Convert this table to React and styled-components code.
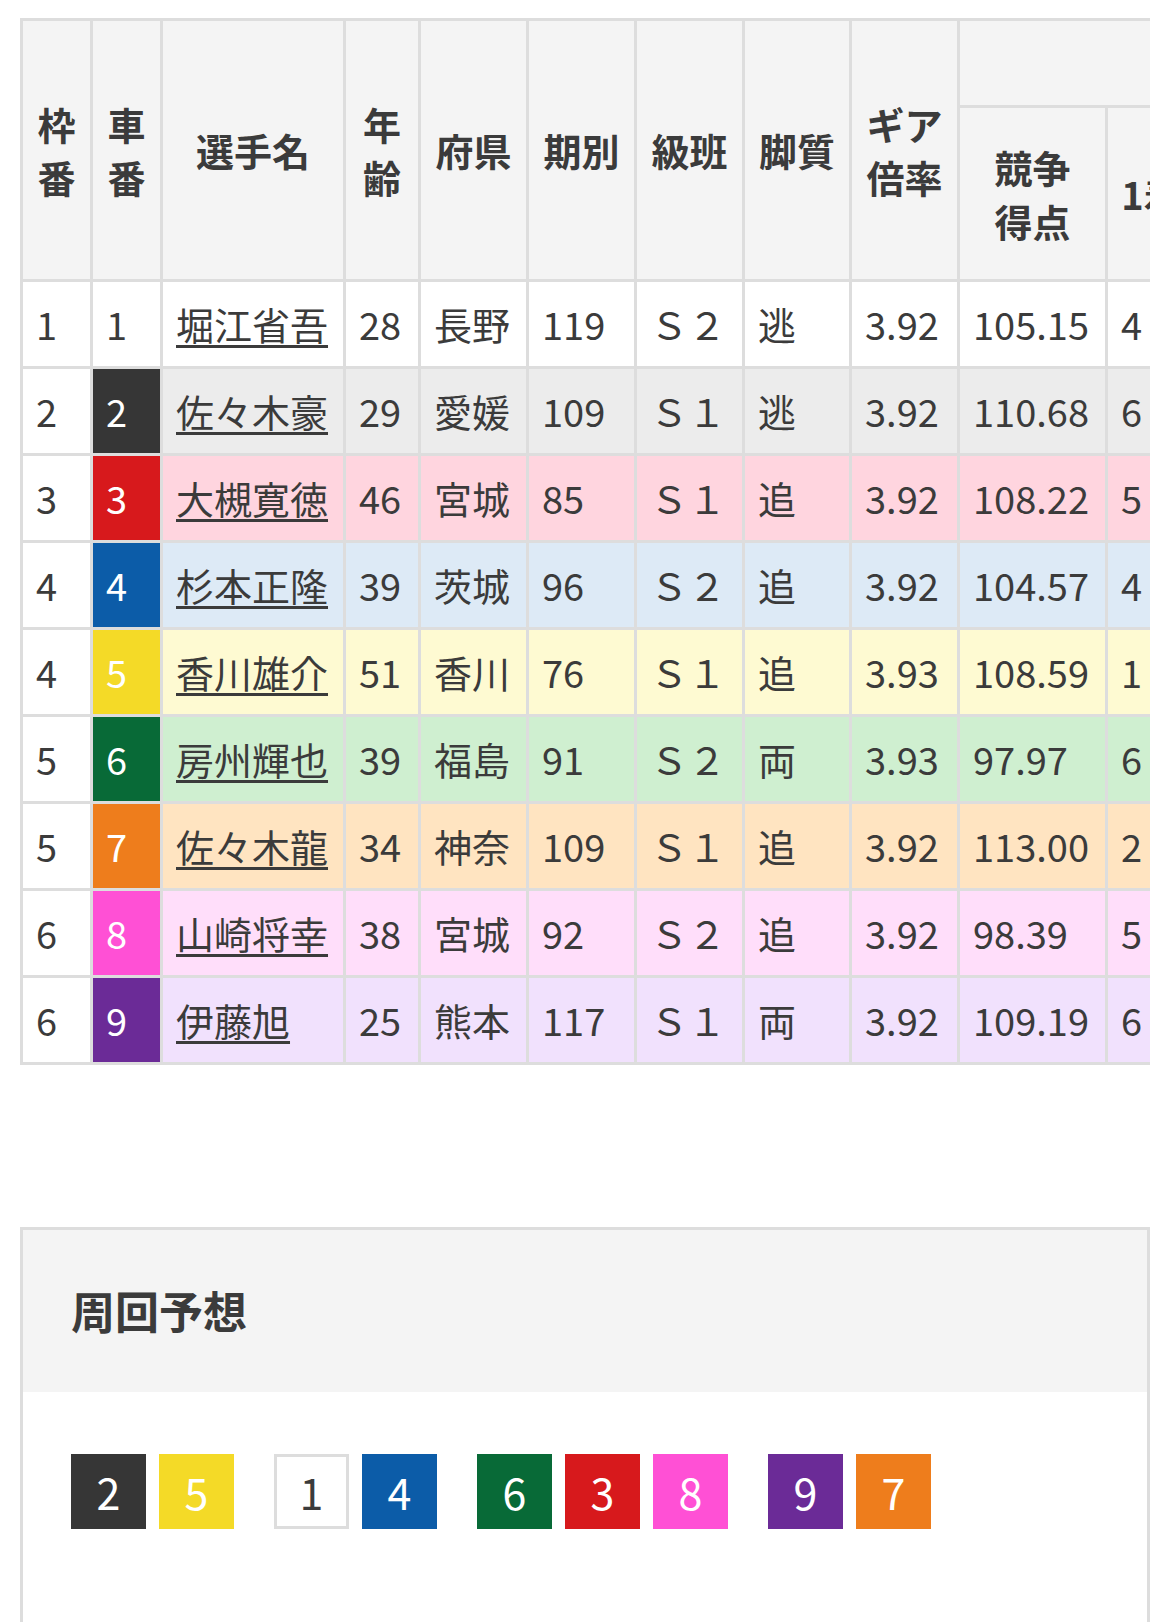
import React from "react";
import styled, { createGlobalStyle } from "styled-components";

const GlobalStyle = createGlobalStyle`
  body {
    margin: 0;
    background: #fff;
    font-family: "Noto Sans CJK JP", "Noto Sans", sans-serif;
    color: #3b3b3b;
  }
`;

const CAR = {
  1: { box: "#ffffff", row: "#ffffff", text: "#3b3b3b" },
  2: { box: "#363636", row: "#ececec", text: "#ffffff" },
  3: { box: "#d7191c", row: "#ffd5df", text: "#ffffff" },
  4: { box: "#0c5ca8", row: "#ddeaf6", text: "#ffffff" },
  5: { box: "#f4da27", row: "#fefad2", text: "#ffffff" },
  6: { box: "#086a37", row: "#cfefd0", text: "#ffffff" },
  7: { box: "#ee7d1c", row: "#ffe4c1", text: "#ffffff" },
  8: { box: "#ff50d5", row: "#ffdefa", text: "#ffffff" },
  9: { box: "#6b2b97", row: "#f1e1fd", text: "#ffffff" },
};

const racers = [
  { waku: 1, car: 1, name: "堀江省吾", age: 28, pref: "長野", term: 119, cls: "Ｓ２", leg: "逃", gear: "3.92", score: "105.15", w1: 4 },
  { waku: 2, car: 2, name: "佐々木豪", age: 29, pref: "愛媛", term: 109, cls: "Ｓ１", leg: "逃", gear: "3.92", score: "110.68", w1: 6 },
  { waku: 3, car: 3, name: "大槻寛徳", age: 46, pref: "宮城", term: 85, cls: "Ｓ１", leg: "追", gear: "3.92", score: "108.22", w1: 5 },
  { waku: 4, car: 4, name: "杉本正隆", age: 39, pref: "茨城", term: 96, cls: "Ｓ２", leg: "追", gear: "3.92", score: "104.57", w1: 4 },
  { waku: 4, car: 5, name: "香川雄介", age: 51, pref: "香川", term: 76, cls: "Ｓ１", leg: "追", gear: "3.93", score: "108.59", w1: 1 },
  { waku: 5, car: 6, name: "房州輝也", age: 39, pref: "福島", term: 91, cls: "Ｓ２", leg: "両", gear: "3.93", score: "97.97", w1: 6 },
  { waku: 5, car: 7, name: "佐々木龍", age: 34, pref: "神奈", term: 109, cls: "Ｓ１", leg: "追", gear: "3.92", score: "113.00", w1: 2 },
  { waku: 6, car: 8, name: "山崎将幸", age: 38, pref: "宮城", term: 92, cls: "Ｓ２", leg: "追", gear: "3.92", score: "98.39", w1: 5 },
  { waku: 6, car: 9, name: "伊藤旭", age: 25, pref: "熊本", term: 117, cls: "Ｓ１", leg: "両", gear: "3.92", score: "109.19", w1: 6 },
];

const lineGroups = [[2, 5], [1, 4], [6, 3, 8], [9, 7]];

const colWidths = [70, 70, 183, 75, 108, 108, 108, 107, 108, 148, 90];

const Page = styled.div`
  padding: 18px 20px 0;
`;

const ScrollArea = styled.div`
  width: 100%;
  overflow-x: auto;
  scrollbar-width: none;
  &::-webkit-scrollbar {
    display: none;
  }
`;

const Table = styled.table`
  border-collapse: collapse;
  table-layout: fixed;
  width: 1175px;
  border: 3px solid #dddddd;
`;

const HeadCell = styled.th`
  background: #f4f4f4;
  border: 3px solid #dddddd;
  font-size: 38px;
  font-weight: 700;
  line-height: 1.4;
  padding: 0 10px;
  text-align: center;
  vertical-align: middle;
  white-space: nowrap;
  height: ${(p) => p.$h || "auto"};
`;

const Row = styled.tr`
  height: 87px;
  background: ${(p) => p.$bg};
`;

const Cell = styled.td`
  border: 3px solid #dddddd;
  font-size: 38px;
  line-height: 1.3;
  padding: 0 13px;
  vertical-align: middle;
  white-space: nowrap;
  overflow: hidden;
  background: ${(p) => p.$bg || "transparent"};
  color: ${(p) => p.$color || "#3b3b3b"};
`;

const NameLink = styled.a`
  color: #3b3b3b;
  text-decoration: underline;
  text-decoration-thickness: 3px;
  text-underline-offset: 5px;
  cursor: pointer;
`;

const Spacer = styled.div`
  height: 162px;
`;

const Panel = styled.section`
  border: 3px solid #dddddd;
  border-bottom: none;
  min-height: 400px;
`;

const PanelHead = styled.div`
  background: #f4f4f4;
  padding: 47px 48px 49px;
  h2 {
    margin: 0;
    font-size: 44px;
    font-weight: 700;
    line-height: 66px;
    color: #3b3b3b;
  }
`;

const LineRow = styled.div`
  display: flex;
  align-items: center;
  gap: 40px;
  padding: 62px 48px;
`;

const LineGroup = styled.div`
  display: flex;
  gap: 13px;
`;

const CarBox = styled.span`
  display: flex;
  align-items: center;
  justify-content: center;
  box-sizing: border-box;
  width: 75px;
  height: 75px;
  font-size: 43px;
  line-height: 1;
  background: ${(p) => CAR[p.$car].box};
  color: ${(p) => CAR[p.$car].text};
  border: ${(p) => (p.$car === 1 ? "3px solid #dddddd" : "none")};
`;

export default function App() {
  return (
    <Page>
      <GlobalStyle />
      <ScrollArea>
        <Table>
          <colgroup>
            {colWidths.map((w, i) => (
              <col key={i} style={{ width: `${w}px` }} />
            ))}
          </colgroup>
          <thead>
            <tr>
              <HeadCell rowSpan={2}>枠<br />番</HeadCell>
              <HeadCell rowSpan={2}>車<br />番</HeadCell>
              <HeadCell rowSpan={2}>選手名</HeadCell>
              <HeadCell rowSpan={2}>年<br />齢</HeadCell>
              <HeadCell rowSpan={2}>府県</HeadCell>
              <HeadCell rowSpan={2}>期別</HeadCell>
              <HeadCell rowSpan={2}>級班</HeadCell>
              <HeadCell rowSpan={2}>脚質</HeadCell>
              <HeadCell rowSpan={2}>ギア<br />倍率</HeadCell>
              <HeadCell colSpan={2} $h="84px" />
            </tr>
            <tr>
              <HeadCell $h="171px">競争<br />得点</HeadCell>
              <HeadCell>1着</HeadCell>
            </tr>
          </thead>
          <tbody>
            {racers.map((r) => (
              <Row key={r.car} $bg={CAR[r.car].row}>
                <Cell $bg="#ffffff">{r.waku}</Cell>
                <Cell $bg={CAR[r.car].box} $color={CAR[r.car].text}>{r.car}</Cell>
                <Cell><NameLink>{r.name}</NameLink></Cell>
                <Cell>{r.age}</Cell>
                <Cell>{r.pref}</Cell>
                <Cell>{r.term}</Cell>
                <Cell>{r.cls}</Cell>
                <Cell>{r.leg}</Cell>
                <Cell>{r.gear}</Cell>
                <Cell>{r.score}</Cell>
                <Cell>{r.w1}</Cell>
              </Row>
            ))}
          </tbody>
        </Table>
      </ScrollArea>
      <Spacer />
      <Panel>
        <PanelHead>
          <h2>周回予想</h2>
        </PanelHead>
        <LineRow>
          {lineGroups.map((g, i) => (
            <LineGroup key={i}>
              {g.map((c) => (
                <CarBox key={c} $car={c}>{c}</CarBox>
              ))}
            </LineGroup>
          ))}
        </LineRow>
      </Panel>
    </Page>
  );
}
